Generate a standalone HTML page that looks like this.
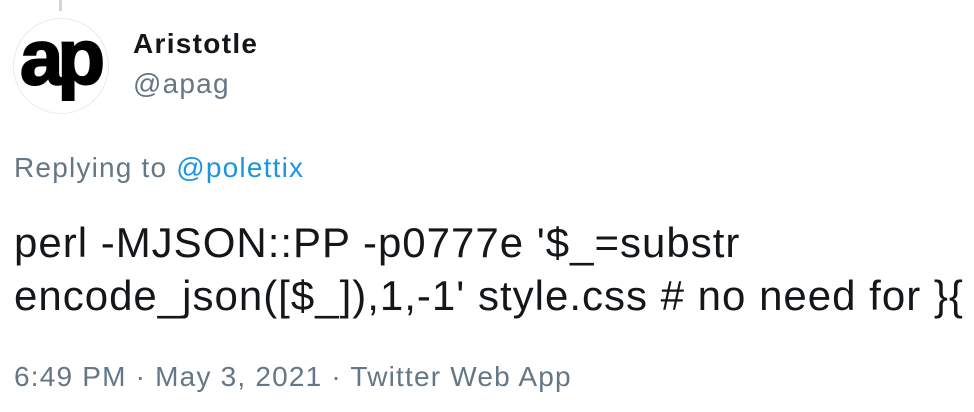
<!DOCTYPE html>
<html><head><style>
body{margin:0;width:974px;height:412px;background:#fff;font-family:"Liberation Sans",Arial,sans-serif;position:relative;overflow:hidden}
.a{position:absolute;white-space:nowrap;font-size:28px;line-height:32px;letter-spacing:1.2px}
.b{position:absolute}
</style></head><body>
<div class="b" style="left:59px;top:0;width:3px;height:11px;background:#ccd6dd"></div>
<div class="b" style="left:13px;top:18px;width:96px;height:96px;border-radius:50%;border:1px solid #e6ecf0;box-sizing:border-box;overflow:hidden">
<svg width="96" height="96" style="position:absolute;left:-1px;top:-1px"><text x="0" y="0" transform="translate(7 66)" font-family="Liberation Sans" font-weight="bold" font-size="78" letter-spacing="-6" fill="#000" stroke="#000" stroke-width="2">ap</text></svg>
</div>
<div class="a" style="left:133px;top:28px;font-weight:bold;color:#14171a;letter-spacing:1.3px">Aristotle</div>
<div class="a" style="left:133px;top:68px;color:#657786">@apag</div>
<div class="a" style="left:14px;top:152px;color:#657786">Replying to <span style="color:#1b95e0">@polettix</span></div>
<div class="a" style="left:14px;top:216px;font-size:42px;line-height:53px;letter-spacing:1px;color:#14171a">perl -MJSON::PP -p0777e '$_=substr<br>encode_json([$_]),1,-1' style.css # no need for }{</div>
<div class="a" style="left:14px;top:361px;color:#657786">6:49 PM · May 3, 2021 · Twitter Web App</div>
</body></html>
